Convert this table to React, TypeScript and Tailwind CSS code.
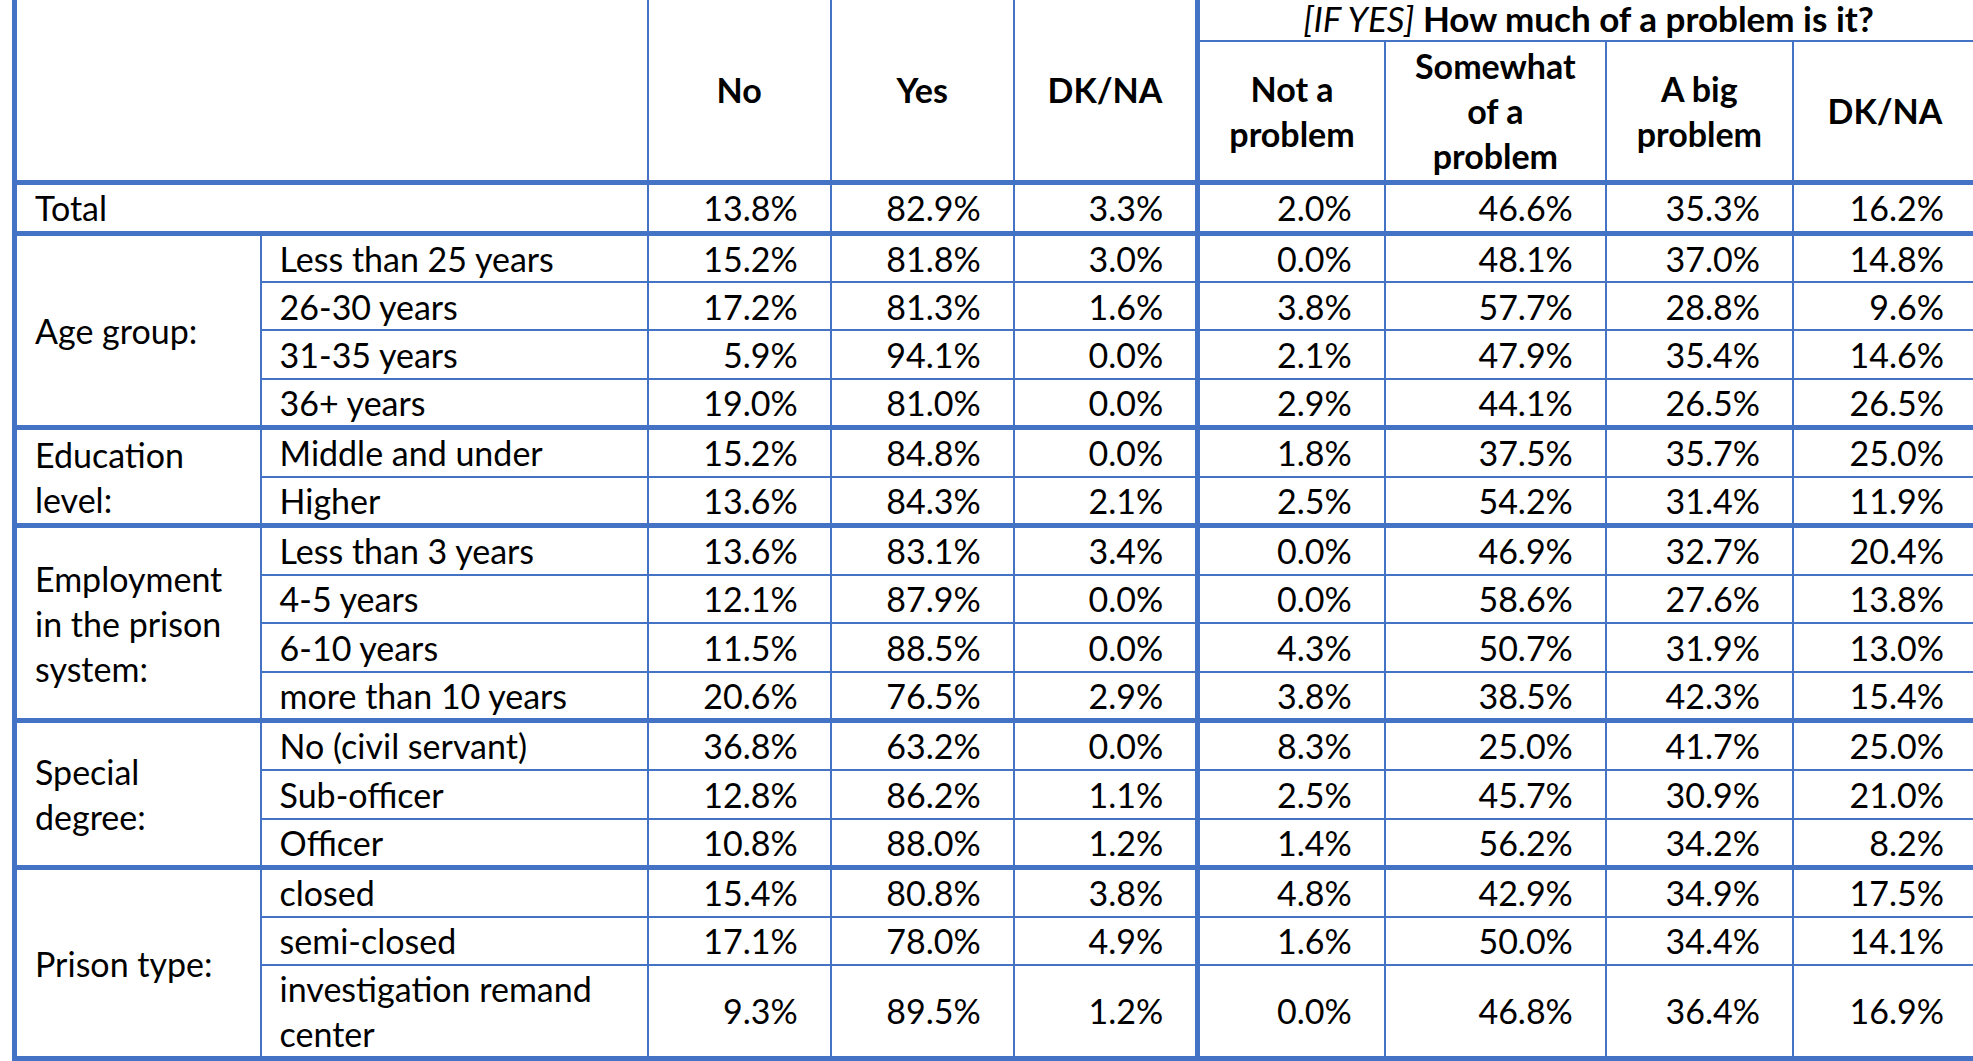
type Row = { label: string[]; values: string[]; h: number };
type Group = { title: string[]; rows: Row[] };

const total = ["13.8%", "82.9%", "3.3%", "2.0%", "46.6%", "35.3%", "16.2%"];

const groups: Group[] = [
  {
    title: ["Age group:"],
    rows: [
      { label: ["Less than 25 years"], values: ["15.2%", "81.8%", "3.0%", "0.0%", "48.1%", "37.0%", "14.8%"], h: 49 },
      { label: ["26-30 years"], values: ["17.2%", "81.3%", "1.6%", "3.8%", "57.7%", "28.8%", "9.6%"], h: 48 },
      { label: ["31-35 years"], values: ["5.9%", "94.1%", "0.0%", "2.1%", "47.9%", "35.4%", "14.6%"], h: 49 },
      { label: ["36+ years"], values: ["19.0%", "81.0%", "0.0%", "2.9%", "44.1%", "26.5%", "26.5%"], h: 48 },
    ],
  },
  {
    title: ["Education", "level:"],
    rows: [
      { label: ["Middle and under"], values: ["15.2%", "84.8%", "0.0%", "1.8%", "37.5%", "35.7%", "25.0%"], h: 49 },
      { label: ["Higher"], values: ["13.6%", "84.3%", "2.1%", "2.5%", "54.2%", "31.4%", "11.9%"], h: 49 },
    ],
  },
  {
    title: ["Employment", "in the prison", "system:"],
    rows: [
      { label: ["Less than 3 years"], values: ["13.6%", "83.1%", "3.4%", "0.0%", "46.9%", "32.7%", "20.4%"], h: 49 },
      { label: ["4-5 years"], values: ["12.1%", "87.9%", "0.0%", "0.0%", "58.6%", "27.6%", "13.8%"], h: 48 },
      { label: ["6-10 years"], values: ["11.5%", "88.5%", "0.0%", "4.3%", "50.7%", "31.9%", "13.0%"], h: 49 },
      { label: ["more than 10 years"], values: ["20.6%", "76.5%", "2.9%", "3.8%", "38.5%", "42.3%", "15.4%"], h: 49 },
    ],
  },
  {
    title: ["Special", "degree:"],
    rows: [
      { label: ["No (civil servant)"], values: ["36.8%", "63.2%", "0.0%", "8.3%", "25.0%", "41.7%", "25.0%"], h: 49 },
      { label: ["Sub-officer"], values: ["12.8%", "86.2%", "1.1%", "2.5%", "45.7%", "30.9%", "21.0%"], h: 49 },
      { label: ["Officer"], values: ["10.8%", "88.0%", "1.2%", "1.4%", "56.2%", "34.2%", "8.2%"], h: 49 },
    ],
  },
  {
    title: ["Prison type:"],
    rows: [
      { label: ["closed"], values: ["15.4%", "80.8%", "3.8%", "4.8%", "42.9%", "34.9%", "17.5%"], h: 49 },
      { label: ["semi-closed"], values: ["17.1%", "78.0%", "4.9%", "1.6%", "50.0%", "34.4%", "14.1%"], h: 48 },
      { label: ["investigation remand", "center"], values: ["9.3%", "89.5%", "1.2%", "0.0%", "46.8%", "36.4%", "16.9%"], h: 94 },
    ],
  },
];

function Lines({ lines }: { lines: string[] }) {
  return (
    <>
      {lines.map((l, i) => (
        <span key={i} className="block whitespace-nowrap">
          {l}
        </span>
      ))}
    </>
  );
}

const line = "border-[#4472c4]";

export default function App() {
  return (
    <div className="w-[1973px] h-[1061px] overflow-hidden bg-white text-black font-['Lato','Liberation_Sans',sans-serif] text-[34px] leading-[45px]">
      <table className="ml-[12px] w-[1966px] table-fixed border-collapse">
        <colgroup>
          <col className="w-[246px]" />
          <col className="w-[387px]" />
          <col className="w-[183px]" />
          <col className="w-[183px]" />
          <col className="w-[184px]" />
          <col className="w-[187px]" />
          <col className="w-[221px]" />
          <col className="w-[187px]" />
          <col className="w-[184px]" />
        </colgroup>
        <thead>
          <tr className="h-[41px]">
            <th colSpan={2} rowSpan={2} className={`border-l-[5px] border-r-2 border-b-[5px] ${line}`} />
            <th rowSpan={2} className={`border-r-2 border-b-[5px] ${line} font-bold text-center align-middle`}>
              No
            </th>
            <th rowSpan={2} className={`border-r-2 border-b-[5px] ${line} font-bold text-center align-middle`}>
              Yes
            </th>
            <th rowSpan={2} className={`border-r-[5px] border-b-[5px] ${line} font-bold text-center align-middle`}>
              DK/NA
            </th>
            <th
              colSpan={4}
              className={`border-b-2 ${line} text-center align-top text-[35px] leading-[36px] whitespace-nowrap`}
            >
              <span className="italic font-normal">[IF YES]</span> <span className="font-bold">How much of a problem is it?</span>
            </th>
          </tr>
          <tr className="h-[141px]">
            {[["Not a", "problem"], ["Somewhat", "of a", "problem"], ["A big", "problem"], ["DK/NA"]].map((h, i) => (
              <th key={i} className={`border-r-2 border-b-[5px] ${line} font-bold text-center align-middle`}>
                <Lines lines={h} />
              </th>
            ))}
          </tr>
        </thead>
        <tbody>
          <tr className="h-[51px]">
            <td colSpan={2} className={`border-l-[5px] border-r-2 border-b-[5px] ${line} pl-[18px] align-middle`}>
              Total
            </td>
            {total.map((v, i) => (
              <td
                key={i}
                className={`${i === 2 ? "border-r-[5px]" : "border-r-2"} border-b-[5px] ${line} pr-[32px] text-right align-middle`}
              >
                {v}
              </td>
            ))}
          </tr>
          {groups.map((g, gi) =>
            g.rows.map((r, ri) => {
              const first = ri === 0;
              const last = gi === groups.length - 1 && ri === g.rows.length - 1;
              const edge = `${first ? "border-t-[5px]" : ""} ${last ? "border-b-[5px]" : "border-b-2"}`;
              return (
                <tr key={`${gi}-${ri}`} style={{ height: r.h }}>
                  {first && (
                    <td
                      rowSpan={g.rows.length}
                      className={`border-l-[5px] border-r-2 border-t-[5px] border-b-[5px] ${line} pl-[18px] align-middle`}
                    >
                      <Lines lines={g.title} />
                    </td>
                  )}
                  <td className={`border-r-2 ${edge} ${line} pl-[18px] align-middle`}>
                    <Lines lines={r.label} />
                  </td>
                  {r.values.map((v, i) => (
                    <td
                      key={i}
                      className={`${i === 2 ? "border-r-[5px]" : "border-r-2"} ${edge} ${line} pr-[32px] text-right align-middle`}
                    >
                      {v}
                    </td>
                  ))}
                </tr>
              );
            })
          )}
        </tbody>
      </table>
    </div>
  );
}
